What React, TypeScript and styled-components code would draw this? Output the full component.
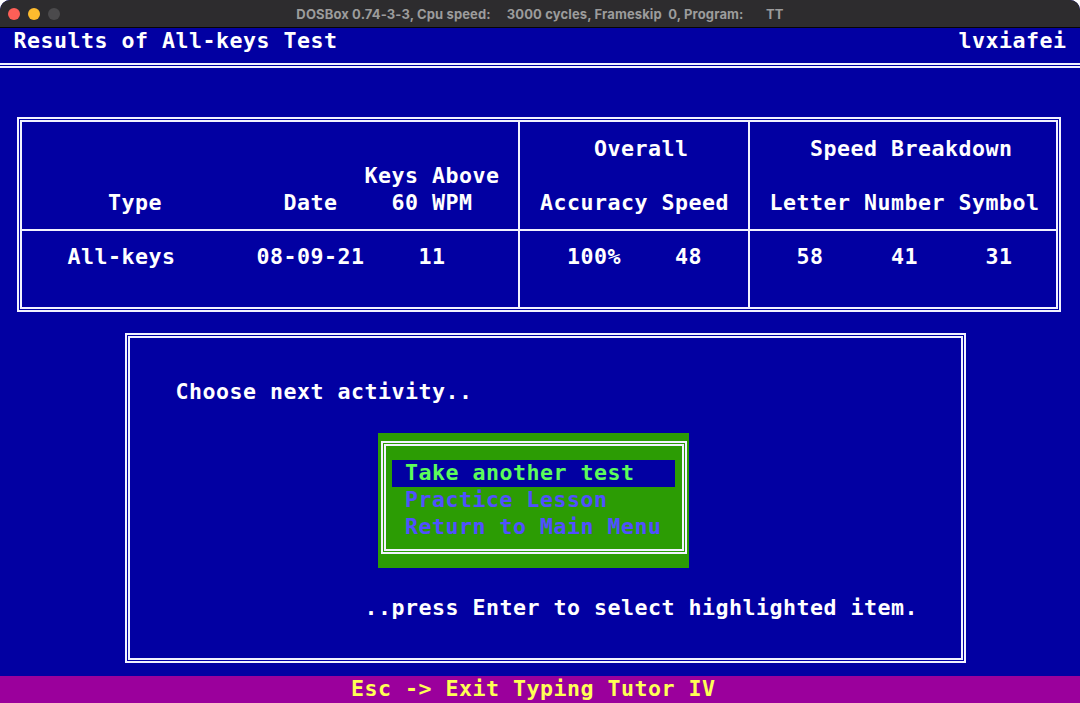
import React from "react";
import styled, { createGlobalStyle } from "styled-components";

const CW = 13.5; // width of one text-mode cell
const RH = 27; // height of one text-mode row

const pal = {
  blue: "#0200a2",
  line: "#f2f2ff",
  white: "#ffffff",
  green: "#2c9c04",
  magenta: "#9b009c",
  yellow: "#ffff55",
  lgreen: "#5cfc5a",
  lblue: "#5050ff",
};

const GlobalStyle = createGlobalStyle`
  html, body { margin: 0; padding: 0; background: #ffffff; }
  #root { width: 1080px; height: 703px; }
`;

const Window = styled.div`
  width: 1080px;
  height: 703px;
  display: flex;
  flex-direction: column;
  border-radius: 10px 10px 0 0;
  overflow: hidden;
  background: ${pal.blue};
`;

const TitleBar = styled.header`
  flex: none;
  height: 28px;
  box-sizing: border-box;
  border-bottom: 1px solid #050505;
  background: #2d2c2e;
  display: grid;
  grid-template-columns: 90px 1fr 90px;
  align-items: center;
`;

const Lights = styled.div`
  display: flex;
  gap: 8px;
  padding-left: 8px;
`;

const Light = styled.span<{ $color: string }>`
  width: 12px;
  height: 12px;
  border-radius: 50%;
  background: ${(p) => p.$color};
`;

const WindowTitle = styled.div`
  text-align: center;
  font-family: Inter, "Noto Sans", sans-serif;
  font-size: 13px;
  font-weight: 700;
  letter-spacing: 0.13px;
  color: #9c9c9c;
  white-space: pre;
  padding-top: 1px;
`;

const Screen = styled.main`
  flex: 1;
  display: grid;
  grid-template-columns: repeat(80, ${CW}px);
  grid-template-rows: repeat(25, ${RH}px);
  background: ${pal.blue};
  color: ${pal.white};
  font-family: "DejaVu Sans Mono", "Liberation Mono", monospace;
  font-size: 21.6px;
  font-weight: 700;
  letter-spacing: 0.5px;
  line-height: 25px;
  white-space: pre;
`;

const Glyphs = styled.span<{ $c: number; $r: number; $n: number; $fg?: string }>`
  grid-column: ${(p) => p.$c + 1} / span ${(p) => p.$n};
  grid-row: ${(p) => p.$r + 1};
  color: ${(p) => p.$fg ?? "inherit"};
`;

function At({ c, r, fg, children }: { c: number; r: number; fg?: string; children: string }) {
  return (
    <Glyphs $c={c} $r={r} $n={children.length} $fg={fg}>
      {children}
    </Glyphs>
  );
}

const DoubleRule = styled.div<{ $r: number }>`
  grid-row: ${(p) => p.$r + 1};
  grid-column: 1 / -1;
  align-self: start;
  margin-top: 8px;
  height: 5px;
  box-sizing: border-box;
  border-top: 2px solid ${pal.line};
  border-bottom: 2px solid ${pal.line};
`;

const DoubleFrame = styled.div<{ $c: number; $r: number; $w: number; $h: number }>`
  grid-column: ${(p) => p.$c + 1} / span ${(p) => p.$w};
  grid-row: ${(p) => p.$r + 1} / span ${(p) => p.$h};
  margin: 8.4px 6px 13.5px 3px;
  border: 5px double ${pal.line};
  background-clip: padding-box;
`;

const ResultsTable = styled(DoubleFrame)`
  display: grid;
  grid-template-columns: 496px 228px 306px;
  grid-template-rows: 106.4px 1fr;
  gap: 2px;
  background-color: ${pal.line};
`;

const TableCell = styled.div<{ $pl: number; $pt: number }>`
  background: ${pal.blue};
  display: grid;
  grid-auto-columns: ${CW}px;
  grid-auto-rows: ${RH}px;
  align-content: start;
  padding: ${(p) => p.$pt}px 0 0 ${(p) => p.$pl}px;
`;

const ActivityPanel = styled(DoubleFrame)`
  display: grid;
  grid-auto-columns: ${CW}px;
  grid-auto-rows: ${RH}px;
  align-content: start;
  padding: 13.6px 0 0 5.5px;
`;

const MenuBox = styled.div<{ $c: number; $r: number; $w: number; $h: number }>`
  grid-column: ${(p) => p.$c + 1} / span ${(p) => p.$w};
  grid-row: ${(p) => p.$r + 1} / span ${(p) => p.$h};
  background: ${pal.green};
  display: flex;
`;

const MenuFrame = styled.div`
  flex: 1;
  margin: 8.4px 1.5px 13.5px 3px;
  border: 5px double ${pal.line};
  padding: 13.6px 0 0 5.5px;
  display: flex;
  flex-direction: column;
`;

const MenuItem = styled.div<{ $active?: boolean }>`
  width: ${21 * CW}px;
  height: ${RH}px;
  box-sizing: border-box;
  padding-left: ${CW}px;
  background: ${(p) => (p.$active ? pal.blue : "transparent")};
  color: ${(p) => (p.$active ? pal.lgreen : pal.lblue)};
`;

const StatusBar = styled.footer`
  grid-row: 25;
  grid-column: 1 / -1;
  background: ${pal.magenta};
  color: ${pal.yellow};
  padding-left: ${26 * CW}px;
`;

const menu = ["Take another test", "Practice Lesson", "Return to Main Menu"];

export default function App() {
  return (
    <>
      <GlobalStyle />
      <Window>
        <TitleBar>
          <Lights>
            <Light $color="#fe5f57" />
            <Light $color="#febc2e" />
            <Light $color="#4b4a4c" />
          </Lights>
          <WindowTitle>
            {"DOSBox 0.74-3-3, Cpu speed:     3000 cycles, Frameskip  0, Program:       TT"}
          </WindowTitle>
          <span />
        </TitleBar>
        <Screen>
          <At c={1} r={0}>Results of All-keys Test</At>
          <At c={71} r={0}>lvxiafei</At>
          <DoubleRule $r={1} />

          <ResultsTable $c={1} $r={3} $w={78} $h={8}>
            <TableCell $pl={5.5} $pt={13.6}>
              <At c={25} r={1}>Keys Above</At>
              <At c={6} r={2}>Type</At>
              <At c={19} r={2}>Date</At>
              <At c={27} r={2}>60 WPM</At>
            </TableCell>
            <TableCell $pl={7} $pt={13.6}>
              <At c={5} r={0}>Overall</At>
              <At c={1} r={2}>Accuracy Speed</At>
            </TableCell>
            <TableCell $pl={6.5} $pt={13.6}>
              <At c={4} r={0}>Speed Breakdown</At>
              <At c={1} r={2}>Letter Number Symbol</At>
            </TableCell>
            <TableCell $pl={5.5} $pt={13.2}>
              <At c={3} r={0}>All-keys</At>
              <At c={17} r={0}>08-09-21</At>
              <At c={29} r={0}>11</At>
            </TableCell>
            <TableCell $pl={7} $pt={13.2}>
              <At c={3} r={0}>100%</At>
              <At c={11} r={0}>48</At>
            </TableCell>
            <TableCell $pl={6.5} $pt={13.2}>
              <At c={3} r={0}>58</At>
              <At c={10} r={0}>41</At>
              <At c={17} r={0}>31</At>
            </TableCell>
          </ResultsTable>

          <ActivityPanel $c={9} $r={11} $w={63} $h={13}>
            <At c={3} r={1}>Choose next activity..</At>
            <MenuBox $c={18} $r={3} $w={23} $h={5}>
              <MenuFrame>
                {menu.map((m, i) => (
                  <MenuItem key={m} $active={i === 0}>
                    {m}
                  </MenuItem>
                ))}
              </MenuFrame>
            </MenuBox>
            <At c={17} r={9}>..press Enter to select highlighted item.</At>
          </ActivityPanel>

          <StatusBar>Esc -&gt; Exit Typing Tutor IV</StatusBar>
        </Screen>
      </Window>
    </>
  );
}
